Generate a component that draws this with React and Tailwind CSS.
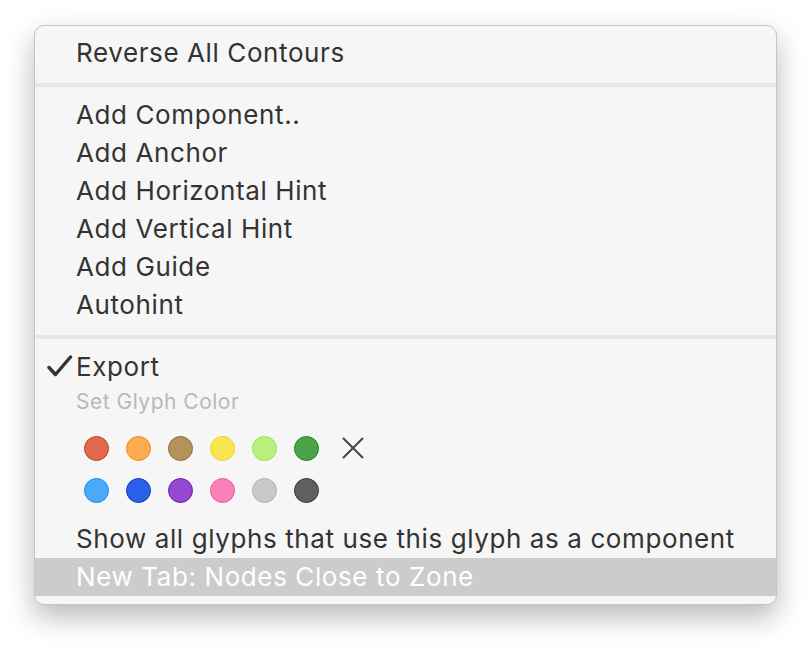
import React from "react";

const swatches = [
  [
    { fill: "#e0694b", ring: "#cc3f18" },
    { fill: "#fdab50", ring: "#f08c1c" },
    { fill: "#b59259", ring: "#94692b" },
    { fill: "#f7e651", ring: "#f0d418" },
    { fill: "#b9f07b", ring: "#98e05a" },
    { fill: "#4aa347", ring: "#178a18" },
  ],
  [
    { fill: "#4aa9f9", ring: "#168ef0" },
    { fill: "#2b5fe8", ring: "#1438cc" },
    { fill: "#9548d1", ring: "#7518b6" },
    { fill: "#fb7fb9", ring: "#ef5598" },
    { fill: "#c9c9c9", ring: "#afafaf" },
    { fill: "#5f5f5f", ring: "#393939" },
  ],
];

function Item({ children, checked = false, active = false }) {
  return (
    <div
      className={`relative flex h-[38px] items-center px-[41px] pb-[2px] text-[26px] tracking-[0.6px] ${
        active ? "bg-[#cccccc] text-white" : "text-[#333333]"
      }`}
    >
      {checked && (
        <svg
          className="absolute left-[12px] top-[7px]"
          width="26"
          height="22"
          viewBox="0 0 26 22"
        >
          <path
            d="M2 12.5 L8.5 19.5 L23.5 2"
            fill="none"
            stroke="#333333"
            strokeWidth="3.4"
            strokeLinecap="round"
            strokeLinejoin="round"
          />
        </svg>
      )}
      {children}
    </div>
  );
}

function Separator() {
  return <div className="mt-[11px] mb-[9px] h-[4px] bg-[#e6e6e6]" />;
}

export default function App() {
  return (
    <div
      className="min-h-screen bg-white pt-[25px] pl-[34px]"
      style={{ fontFamily: "Inter, 'Noto Sans', sans-serif" }}
    >
      <div className="w-[743px] overflow-hidden rounded-[10px] border border-[#c4c4c4] bg-[#f6f6f6] pt-[8px] pb-[8px] shadow-[0_12px_28px_rgba(0,0,0,0.28)]">
        <Item>Reverse All Contours</Item>
        <Separator />
        <Item>Add Component..</Item>
        <Item>Add Anchor</Item>
        <Item>Add Horizontal Hint</Item>
        <Item>Add Vertical Hint</Item>
        <Item>Add Guide</Item>
        <Item>Autohint</Item>
        <Separator />
        <Item checked>Export</Item>
        <div className="flex h-[34px] items-center px-[41px] pb-[2px] text-[21px] tracking-[0.5px] text-[#b9b9b9]">
          Set Glyph Color
        </div>
        <div className="pt-[7px] pb-[9px] pl-[40px]">
          {swatches.map((row, i) => (
            <div key={i} className="flex h-[42px] items-center">
              {row.map((s, j) => (
                <div key={j} className="flex w-[42px] justify-center">
                  <div
                    className="h-[25px] w-[25px] rounded-full border-[1.5px]"
                    style={{ backgroundColor: s.fill, borderColor: s.ring }}
                  />
                </div>
              ))}
              {i === 0 && (
                <div className="ml-[5px] flex w-[42px] justify-center">
                  <svg width="22" height="22" viewBox="0 0 22 22">
                    <path
                      d="M1 1 L21 21 M21 1 L1 21"
                      stroke="#444444"
                      strokeWidth="2"
                    />
                  </svg>
                </div>
              )}
            </div>
          ))}
        </div>
        <Item>Show all glyphs that use this glyph as a component</Item>
        <Item active>New Tab: Nodes Close to Zone</Item>
      </div>
    </div>
  );
}
